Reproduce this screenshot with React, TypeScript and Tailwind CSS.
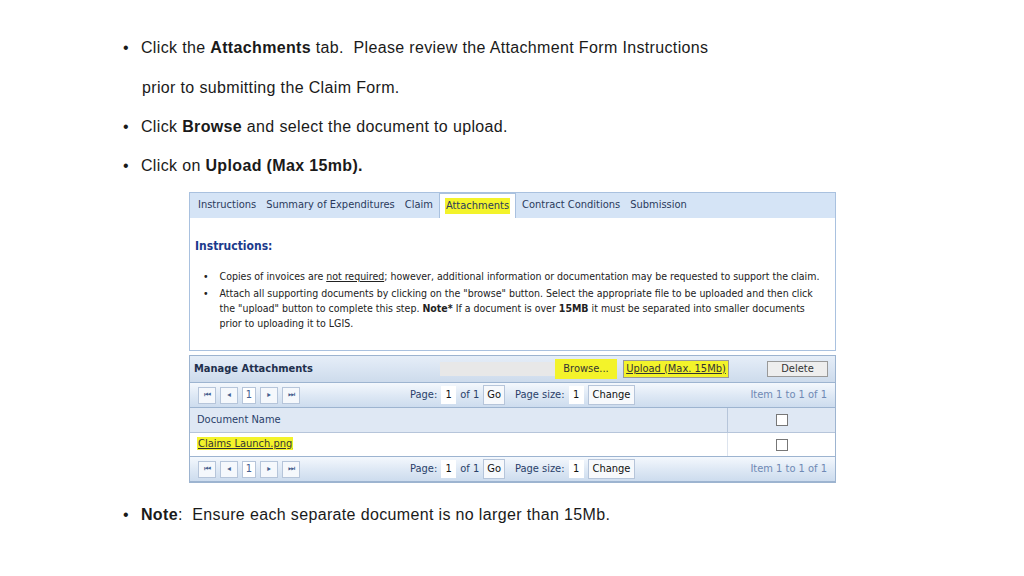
import React from 'react'

const Pager = () => (
  <div className="flex h-[26px] items-center border-y border-[#9db4d0] bg-gradient-to-b from-[#f4f8fd] via-[#dfe9f5] to-[#cddcee] px-[8px] text-[11px] text-[#2a3f6a]">
    <div className="flex items-center gap-[4px]">
      {['⏮', '◂', '1', '▸', '⏭'].map((t, i) => (
        <span
          key={i}
          className={
            'flex h-[17px] items-center justify-center border border-[#b6c5da] bg-[#f5f8fc] text-[8px] text-[#45608f] ' +
            (t === '1' ? 'w-[14px] bg-white text-[11px] text-[#111]' : 'w-[18px]')
          }
        >
          {t}
        </span>
      ))}
    </div>
    <div className="ml-[110px] flex items-center gap-[4px]">
      <span>Page:</span>
      <span className="flex h-[18px] w-[15px] items-center justify-center bg-white text-[#111]">1</span>
      <span>of 1</span>
      <span className="flex h-[20px] items-center border border-[#b6c5da] bg-[#f7f9fc] px-[3px] text-[#111]">Go</span>
      <span className="ml-[6px]">Page size:</span>
      <span className="flex h-[18px] w-[15px] items-center justify-center bg-white text-[#111]">1</span>
      <span className="flex h-[20px] items-center border border-[#b6c5da] bg-[#f7f9fc] px-[4px] text-[#111]">Change</span>
    </div>
    <span className="ml-auto text-[#6f89b4]">Item 1 to 1 of 1</span>
  </div>
)

export default function App() {
  const bullet = 'flex gap-[12px] text-[16px] leading-[18px] tracking-[0.35px] text-[#1a1a1a]'
  return (
    <div className="h-[576px] w-[1024px] overflow-hidden bg-white" style={{ fontFamily: '"Liberation Sans", Arial, sans-serif' }}>
      <div className="ml-[123px] pt-[39px]">
        <div className={bullet}>
          <span>•</span>
          <span>Click the <b>Attachments</b> tab.&nbsp; Please review the Attachment Form Instructions</span>
        </div>
        <div className="ml-[19px] mt-[22px] text-[16px] leading-[18px] tracking-[0.35px] text-[#1a1a1a]">prior to submitting the Claim Form.</div>
        <div className={bullet + ' mt-[21px]'}>
          <span>•</span>
          <span>Click <b>Browse</b> and select the document to upload.</span>
        </div>
        <div className={bullet + ' mt-[21px]'}>
          <span>•</span>
          <span>Click on <b>Upload (Max 15mb).</b></span>
        </div>
      </div>

      <div className="ml-[189px] mt-[17px] w-[647px] text-[11px] text-[#222]" style={{ fontFamily: 'Tahoma, "DejaVu Sans Condensed", "Liberation Sans", sans-serif' }}>
        <div className="border border-[#a9c1df]">
          <div className="flex h-[25px] items-end bg-[#d5e4f6] px-[3px] text-[11px] text-[#2a3a5c]">
            {['Instructions', 'Summary of Expenditures', 'Claim', 'Attachments', 'Contract Conditions', 'Submission'].map((t) => (
              <span
                key={t}
                className={
                  'flex h-[25px] items-center px-[5px] ' +
                  (t === 'Attachments' ? 'mx-[1px] border-x border-t border-[#a9c1df] bg-white' : '')
                }
              >
                <span className={t === 'Attachments' ? 'bg-[#f3f32a] px-[1px]' : ''}>{t}</span>
              </span>
            ))}
          </div>
          <div className="h-[132px] bg-white px-[5px] pt-[19px]">
            <div className="text-[12px] font-bold text-[#1b3a8c]">Instructions:</div>
            <ul className="mt-[14px] space-y-[2px] pl-[8px] pr-[4px] text-[10.5px] leading-[15px] text-[#222]">
              <li className="flex gap-[11px]">
                <span>•</span>
                <span>Copies of invoices are <u>not required</u>; however, additional information or documentation may be requested to support the claim.</span>
              </li>
              <li className="flex gap-[11px]">
                <span>•</span>
                <span>Attach all supporting documents by clicking on the "browse" button. Select the appropriate file to be uploaded and then click the "upload" button to complete this step. <b>Note*</b> If a document is over <b>15MB</b> it must be separated into smaller documents prior to uploading it to LGIS.</span>
              </li>
            </ul>
          </div>
        </div>

        <div className="mt-[4px] border border-[#9db4d0]">
          <div className="flex h-[26px] items-center bg-gradient-to-b from-[#e6eef8] to-[#cddbec] px-[4px]">
            <span className="font-bold text-[#22304d]">Manage Attachments</span>
            <span className="ml-auto h-[14px] w-[115px] bg-[#e8e8e8]" />
            <span className="flex h-[20px] w-[62px] items-center justify-center bg-[#f3f32a] text-[#333]">Browse...</span>
            <span className="ml-[6px] flex h-[18px] w-[106px] items-center justify-center border border-[#999] bg-[#f3f32a] text-[#333] underline">Upload (Max. 15Mb)</span>
            <span className="ml-[38px] mr-[3px] flex h-[16px] w-[61px] items-center justify-center border border-[#999] bg-[#eee] text-[#333]">Delete</span>
          </div>
          <Pager />
          <div className="flex h-[24px] items-center bg-[#dfe8f4] text-[#2a3f6a]">
            <span className="flex-1 px-[7px]">Document Name</span>
            <span className="flex h-full w-[108px] items-center justify-center border-l border-[#b6c5da]">
              <span className="h-[12px] w-[12px] border border-[#777] bg-white" />
            </span>
          </div>
          <div className="flex h-[24px] items-center border-t border-[#b6c5da] bg-white">
            <span className="flex-1 px-[7px]">
              <span className="bg-[#f3f32a] px-[1px] text-[#333] underline">Claims Launch.png</span>
            </span>
            <span className="flex h-full w-[108px] items-center justify-center border-l border-[#dde4ee]">
              <span className="h-[12px] w-[12px] border border-[#777] bg-white" />
            </span>
          </div>
          <Pager />
        </div>
      </div>

      <div className={bullet + ' ml-[123px] mt-[23px]'}>
        <span>•</span>
        <span><b>Note</b>:&nbsp; Ensure each separate document is no larger than 15Mb.</span>
      </div>
    </div>
  )
}
